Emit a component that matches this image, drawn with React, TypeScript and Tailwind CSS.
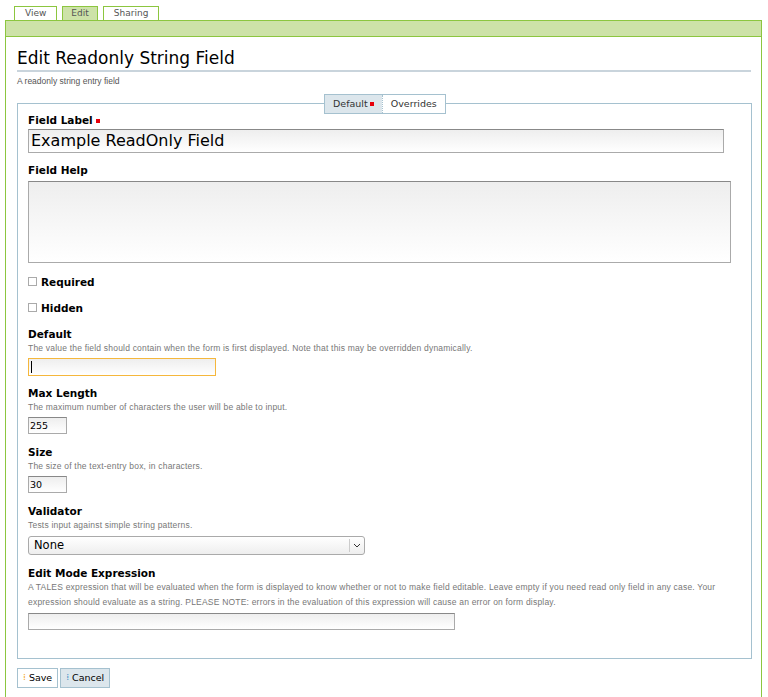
import React from 'react'

const font = { fontFamily: '"DejaVu Sans", Verdana, sans-serif' }

function Label({ children }: { children: React.ReactNode }) {
  return <div className="text-[10.5px] font-bold text-black leading-[14px]">{children}</div>
}
function Help({ children }: { children: React.ReactNode }) {
  return <div className="text-[8.5px] text-[#777] leading-[15px] tracking-[0.2px]" style={{ fontFamily: '"Liberation Sans", Arial, sans-serif' }}>{children}</div>
}
const inputCls = 'border border-[#aaa] border-t-[#888] bg-gradient-to-b from-[#eee] to-white'

export default function App() {
  return (
    <div className="w-[768px] h-[697px] bg-white overflow-hidden" style={font}>
      <div className="flex gap-[5px] pl-[14px] pt-[6px]">
        <div className="h-[14px] px-[10px] text-[9px] leading-[12px] text-[#555] border border-b-0 border-[#8cc63f] bg-white">View</div>
        <div className="h-[14px] px-[8px] text-[9px] leading-[12px] text-[#555] border border-b-0 border-[#8cc63f] bg-[#cde2a8]">Edit</div>
        <div className="h-[14px] px-[10px] text-[9px] leading-[12px] text-[#555] border border-b-0 border-[#8cc63f] bg-white">Sharing</div>
      </div>
      <div className="ml-[5px] w-[757px] h-[700px] border-x border-[#8cc63f]">
        <div className="h-[17px] bg-[#cde2a8] border-y border-[#8cc63f]" />
        <div className="pl-[11px] pr-[11px]">
          <h1 className="mt-[11px] text-[17px] leading-[20px] text-black border-b-2 border-[#c9d4dc] pb-[2px] w-[734px]">Edit Readonly String Field</h1>
          <div className="mt-[3px] text-[8.5px] text-[#555]" style={{ fontFamily: '"Liberation Sans", Arial, sans-serif' }}>A readonly string entry field</div>
          <div className="relative mt-[15px] w-[735px] h-[556px] border border-[#a5c1cf]">
            <div className="absolute left-[306px] -top-[10px] flex h-[20px] border border-[#a5c1cf] text-[9.5px] leading-[18px] text-[#333]">
              <div className="px-[8px] bg-[#dce6ec] flex items-center gap-[2px]">Default<span className="inline-block w-[4px] h-[4px] bg-red-600" /></div>
              <div className="px-[8px] bg-white border-l border-dotted border-[#a5c1cf]">Overrides</div>
            </div>
            <div className="pl-[10px] pt-[9px]">
              <Label>Field Label <span className="inline-block w-[4px] h-[4px] bg-red-600 align-middle" /></Label>
              <div className={`mt-[2px] w-[696px] h-[24px] ${inputCls} text-[16px] leading-[22px] pl-[2px] text-black`}>Example ReadOnly Field</div>
              <div className="mt-[10px]"><Label>Field Help</Label></div>
              <div className={`mt-[4px] w-[703px] h-[82px] ${inputCls}`} />
              <div className="mt-[12px] flex items-center gap-[4px]"><span className="w-[9px] h-[9px] border border-[#aaa]" /><Label>Required</Label></div>
              <div className="mt-[12px] flex items-center gap-[4px]"><span className="w-[9px] h-[9px] border border-[#aaa]" /><Label>Hidden</Label></div>
              <div className="mt-[12px]"><Label>Default</Label></div>
              <Help>The value the field should contain when the form is first displayed. Note that this may be overridden dynamically.</Help>
              <div className="mt-[2px] w-[188px] h-[18px] border border-[#f5b73c] bg-gradient-to-b from-[#eee] to-white pl-[2px] pt-[2px]"><div className="w-px h-[12px] bg-black" /></div>
              <div className="mt-[10px]"><Label>Max Length</Label></div>
              <Help>The maximum number of characters the user will be able to input.</Help>
              <div className={`mt-[2px] w-[39px] h-[17px] ${inputCls} text-[9.5px] leading-[15px] pl-[1px]`}>255</div>
              <div className="mt-[11px]"><Label>Size</Label></div>
              <Help>The size of the text-entry box, in characters.</Help>
              <div className={`mt-[2px] w-[39px] h-[17px] ${inputCls} text-[9.5px] leading-[15px] pl-[1px]`}>30</div>
              <div className="mt-[11px]"><Label>Validator</Label></div>
              <Help>Tests input against simple string patterns.</Help>
              <div className="mt-[3px] w-[337px] h-[19px] flex border border-[#aaa] rounded-[3px] bg-gradient-to-b from-white to-[#eee]">
                <div className="flex-1 text-[11.5px] leading-[17px] pl-[5px]">None</div>
                <div className="w-[15px] border-l border-[#ccc] my-[2px] flex items-center justify-center">
                  <svg width="8" height="5" viewBox="0 0 8 5"><path d="M1 1l3 3 3-3" fill="none" stroke="#333" strokeWidth="1" /></svg>
                </div>
              </div>
              <div className="mt-[11px]"><Label>Edit Mode Expression</Label></div>
              <div className="pr-[10px]"><Help>A TALES expression that will be evaluated when the form is displayed to know whether or not to make field editable. Leave empty if you need read only field in any case. Your expression should evaluate as a string. PLEASE NOTE: errors in the evaluation of this expression will cause an error on form display.</Help></div>
              <div className={`mt-[3px] w-[427px] h-[17px] ${inputCls}`} />
            </div>
          </div>
          <div className="mt-[9px] flex gap-[2px]">
            <div className="h-[20px] px-[5px] flex items-center gap-[3px] border border-[#a5c1cf] bg-white text-[9.5px]"><span className="text-[#f5a623] text-[9px]">⁞</span>Save</div>
            <div className="h-[20px] px-[5px] flex items-center gap-[3px] border border-[#a5c1cf] bg-[#dce6ec] text-[9.5px]"><span className="text-[#4a90c8] text-[9px]">⁞</span>Cancel</div>
          </div>
        </div>
      </div>
    </div>
  )
}
